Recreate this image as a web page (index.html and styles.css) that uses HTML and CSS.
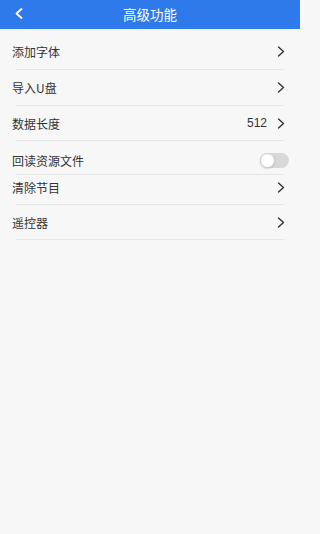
FILE: index.html
```html
<!DOCTYPE html>
<html lang="zh">
<head>
<meta charset="utf-8">
<link rel="stylesheet" href="styles.css">
</head>
<body>
<div class="page">
<div class="header">
  <svg class="back" width="8" height="11" viewBox="0 0 8 11"><polyline points="6.5,1 1.5,5.5 6.5,10" fill="none" stroke="#fff" stroke-width="1.8" stroke-linecap="round" stroke-linejoin="round"/></svg>
  <div class="title">高级功能</div>
</div>
<div class="list">
  <div class="row r1"><span class="label">添加字体</span><svg class="chev" width="8" height="11" viewBox="0 0 8 11"><polyline points="1.5,1 6.5,5.5 1.5,10" fill="none" stroke="#333" stroke-width="1.4" stroke-linecap="round" stroke-linejoin="round"/></svg></div>
  <div class="sep"></div>
  <div class="row r2"><span class="label">导入U盘</span><svg class="chev" width="8" height="11" viewBox="0 0 8 11"><polyline points="1.5,1 6.5,5.5 1.5,10" fill="none" stroke="#333" stroke-width="1.4" stroke-linecap="round" stroke-linejoin="round"/></svg></div>
  <div class="sep"></div>
  <div class="row r3"><span class="label">数据长度</span><span class="value">512</span><svg class="chev" width="8" height="11" viewBox="0 0 8 11"><polyline points="1.5,1 6.5,5.5 1.5,10" fill="none" stroke="#333" stroke-width="1.4" stroke-linecap="round" stroke-linejoin="round"/></svg></div>
  <div class="sep"></div>
  <div class="row r4"><span class="label">回读资源文件</span><span class="toggle"><span class="knob"></span></span></div>
  <div class="sep"></div>
  <div class="row r5"><span class="label">清除节目</span><svg class="chev" width="8" height="11" viewBox="0 0 8 11"><polyline points="1.5,1 6.5,5.5 1.5,10" fill="none" stroke="#333" stroke-width="1.4" stroke-linecap="round" stroke-linejoin="round"/></svg></div>
  <div class="sep"></div>
  <div class="row r6"><span class="label">遥控器</span><svg class="chev" width="8" height="11" viewBox="0 0 8 11"><polyline points="1.5,1 6.5,5.5 1.5,10" fill="none" stroke="#333" stroke-width="1.4" stroke-linecap="round" stroke-linejoin="round"/></svg></div>
  <div class="sep"></div>
</div>
</div>
</body>
</html>
```
FILE: styles.css
```css
html, body {
  margin: 0;
  padding: 0;
  background: #f7f7f7;
  font-family: "Noto Sans CJK SC", "Noto Sans", sans-serif;
  color: #333;
}
.page {
  width: 300px;
  min-height: 534px;
  background: #f7f7f7;
}
.header {
  height: 29px;
  background: #2f7aea;
  display: flex;
  align-items: center;
  justify-content: center;
  position: relative;
}
.back {
  position: absolute;
  left: 15px;
  top: 8px;
}
.title {
  color: #fff;
  font-size: 13.5px;
  line-height: 29px;
}
.list {
  padding-top: 5px;
}
.row {
  display: flex;
  align-items: center;
  padding-left: 12px;
  padding-right: 15px;
  box-sizing: border-box;
  font-size: 12px;
}
.label {
  flex: 1;
}
.r1 { height: 35px; }
.r2 { height: 35px; }
.r3 { height: 34px; }
.r4 { height: 33px; padding-top: 5px; padding-right: 11px; }
.r5 { height: 29px; padding-bottom: 5px; }
.r6 { height: 34px; }
.value {
  font-family: "Liberation Sans", sans-serif;
  font-size: 12px;
  margin-right: 10px;
}
.chev {
  display: block;
}
.sep {
  height: 1px;
  background: #e6e6e6;
  margin: 0 16px;
}
.toggle {
  width: 29px;
  height: 15px;
  border-radius: 8px;
  background: #d8d8d8;
  display: flex;
  align-items: center;
}
.knob {
  width: 15px;
  height: 15px;
  border-radius: 50%;
  background: #fff;
  box-sizing: border-box;
  border: 1px solid #d0d0d0;
  box-shadow: 0 1px 2px rgba(0,0,0,0.15);
}
```
